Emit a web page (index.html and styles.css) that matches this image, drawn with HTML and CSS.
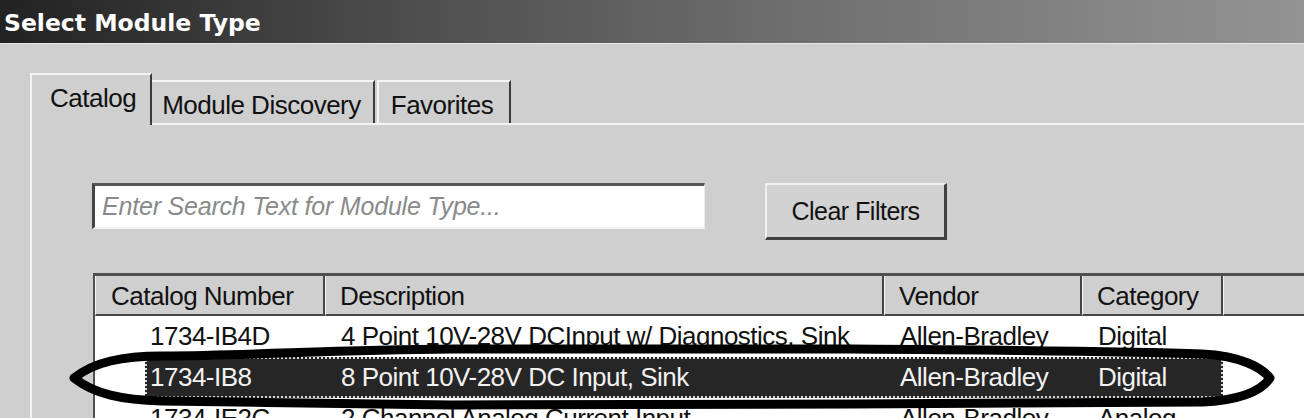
FILE: index.html
```html
<!DOCTYPE html>
<html>
<head>
    <title>Select Module Type</title>
    <link rel="stylesheet" href="styles.css">
</head>
<body>
    <div class="titlebar">Select Module Type</div>

    <div class="dialog">
        <div class="tabs">
            <div class="tab active">Catalog</div>
            <div class="tab">Module Discovery</div>
            <div class="tab fav">Favorites</div>
        </div>

        <div class="panel">
            <div class="filters">
                <input type="text" class="search" placeholder="Enter Search Text for Module Type...">
                <button class="btn">Clear Filters</button>
            </div>

            <div class="list">
                <div class="list-head">
                    <div class="hcell">Catalog Number</div>
                    <div class="hcell">Description</div>
                    <div class="hcell">Vendor</div>
                    <div class="hcell">Category</div>
                    <div class="hcell"></div>
                </div>

                <div class="row">
                    <div class="cell num">1734-IB4D</div>
                    <div class="cell">4 Point 10V-28V DCInput w/ Diagnostics, Sink</div>
                    <div class="cell">Allen-Bradley</div>
                    <div class="cell">Digital</div>
                </div>
                <div class="row selected">
                    <div class="hl"></div>
                    <div class="cell num">1734-IB8</div>
                    <div class="cell">8 Point 10V-28V DC Input, Sink</div>
                    <div class="cell">Allen-Bradley</div>
                    <div class="cell">Digital</div>
                </div>
                <div class="row">
                    <div class="cell num">1734-IE2C</div>
                    <div class="cell">2 Channel Analog Current Input</div>
                    <div class="cell">Allen-Bradley</div>
                    <div class="cell">Analog</div>
                </div>

                <!-- hand drawn circle round the selected module -->
                <svg class="mark" width="1304" height="418" viewBox="0 0 1304 418">
                    <path d="M 72 378 C 92 362, 120 356, 160 356 C 260 355, 330 350, 450 349 L 850 349 C 1000 350, 1150 352, 1200 354 C 1240 356, 1260 368, 1268 378 C 1260 390, 1240 400, 1200 402 C 1150 403, 1000 404, 850 404 L 450 405 C 330 404, 260 402, 160 401 C 120 400, 92 394, 72 378 Z"
                          fill="none" stroke="#000" stroke-width="9" stroke-linejoin="round"/>
                </svg>
            </div>
        </div>
    </div>
</body>
</html>
```

FILE: styles.css
```css
html, body {
    margin: 0;
    height: 418px;
    overflow: hidden;
}
body {
    background-color: #cfcfcf;
    font-family: "Liberation Sans", Arial, sans-serif;
    font-size: 26px;
    letter-spacing: -0.5px;
    color: #111;
}
.titlebar {
    box-sizing: border-box;
    height: 44px;
    padding: 4px 0 0 4px;
    line-height: 39px;
    border-bottom: 1px solid #e8e8e8;
    background: linear-gradient(to right, #222222 0%, #4c4c4c 30%, #6e6e6e 60%, #939393 100%);
    color: #ffffff;
    font-family: "DejaVu Sans", Verdana, sans-serif;
    font-weight: bold;
    font-size: 23.5px;
    letter-spacing: 0;
}
.dialog {
    padding-top: 31px;
}
.tabs {
    display: flex;
    align-items: flex-end;
    margin-left: 30px;
    border-bottom: 2px solid #f4f4f4;
    height: 48px;
}
.tab {
    box-sizing: border-box;
    height: 43px;
    padding: 4px 12px 0 10px;
    line-height: 38px;
    border-top: 2px solid #f4f4f4;
    border-left: 2px solid #f4f4f4;
    border-right: 2px solid #3a3a3a;
    background-color: #cfcfcf;
}
.tab + .tab {
    margin-left: 2px;
}
.tab.fav {
    padding: 4px 16px 0 12px;
}
.tab.active {
    height: 52px;
    margin-bottom: -2px;
    padding: 3px 14px 0 18px;
    line-height: 40px;
    position: relative;
}
.tab.active + .tab {
    margin-left: 0;
    border-left: none;
}
.panel {
    margin-left: 30px;
    border-left: 2px solid #f4f4f4;
    padding: 58px 0 0 60px;
}
.filters {
    display: flex;
    align-items: flex-start;
    gap: 60px;
    height: 57px;
}
.search {
    box-sizing: border-box;
    width: 613px;
    height: 46px;
    padding: 0 0 0 7px;
    margin: 0;
    border-top: 3px solid #555555;
    border-left: 3px solid #444444;
    border-right: 1px solid #ececec;
    border-bottom: 2px solid #f2f2f2;
    background-color: #ffffff;
    font-family: "Liberation Sans", Arial, sans-serif;
    font-size: 25px;
    letter-spacing: -0.2px;
    outline: none;
}
.search::placeholder {
    color: #8a8a8a;
    font-style: italic;
}
.btn {
    box-sizing: border-box;
    width: 182px;
    height: 57px;
    margin: 0;
    padding: 0;
    border-top: 2px solid #f0f0f0;
    border-left: 2px solid #f0f0f0;
    border-right: 3px solid #404040;
    border-bottom: 3px solid #404040;
    background-color: #d2d2d2;
    color: #111;
    font-family: "Liberation Sans", Arial, sans-serif;
    font-size: 25px;
    letter-spacing: -0.5px;
}
.list {
    position: relative;
    margin-top: 33px;
    margin-left: 1px;
    border-top: 3px solid #505050;
    border-left: 2px solid #505050;
    background-color: #ffffff;
    height: 200px;
}
.list-head,
.row {
    display: grid;
    grid-template-columns: 230px 559px 198px 141px 1fr;
}
.hcell {
    box-sizing: border-box;
    height: 40px;
    padding: 2px 0 0 14px;
    line-height: 36px;
    background-color: #cfcfcf;
    border-left: 1px solid #f4f4f4;
    border-right: 2px solid #454545;
    border-bottom: 2px solid #454545;
    white-space: nowrap;
}
.hcell:first-child {
    padding-left: 15px;
}
.hcell:last-child {
    border-right: none;
}
.row {
    height: 41px;
    line-height: 41px;
}
.cell {
    grid-row: 1;
    padding-left: 16px;
    white-space: nowrap;
}
.cell.num {
    grid-column: 1;
    padding-left: 55px;
}
.row .cell:nth-child(2) { grid-column: 2; }
.row .cell:nth-child(3) { grid-column: 3; }
.row .cell:nth-child(4) { grid-column: 4; }
.row.selected .cell:nth-child(2) { grid-column: 1; }
.row.selected .cell:nth-child(3) { grid-column: 2; }
.row.selected .cell:nth-child(4) { grid-column: 3; }
.row.selected .cell:nth-child(5) { grid-column: 4; }
.row.selected {
    color: #f2f2f2;
}
.row.selected .hl {
    grid-row: 1;
    grid-column: 1 / 5;
    margin-left: 50px;
    background-color: #262626;
    outline: 2px dotted #d8d8d8;
    outline-offset: -2px;
}
.mark {
    position: absolute;
    left: -93px;
    top: -276px;
    overflow: visible;
    pointer-events: none;
}
```
